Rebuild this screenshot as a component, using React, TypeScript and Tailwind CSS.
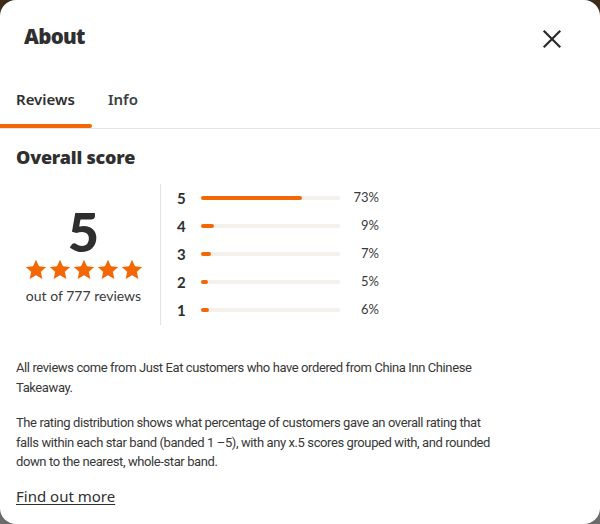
import React from "react";

const rows = [
  { star: 5, pct: 73 },
  { star: 4, pct: 9 },
  { star: 3, pct: 7 },
  { star: 2, pct: 5 },
  { star: 1, pct: 6 },
];

function Star() {
  return (
    <svg width="22" height="21" viewBox="0 0 24 23" aria-hidden>
      <path
        d="M12 0.8l3.3 7.2 7.9.8-5.9 5.3 1.7 7.8L12 17.9l-7 4 1.7-7.8L.8 8.8l7.9-.8z"
        fill="#f36805"
      />
    </svg>
  );
}

export default function App() {
  return (
    <div className="w-[600px] h-[524px] bg-[linear-gradient(to_bottom,#3d2c1a_50%,#6b6b6b_50%)]">
      <div
        className="w-full h-full bg-white rounded-[16px] text-[#2f2f2f] flex flex-col"
        style={{ fontFamily: '"Noto Sans", sans-serif' }}
      >
        <div className="flex items-center justify-between pl-6 pr-[38px] h-[72px]">
          <h1 className="text-[20.5px] font-black tracking-[-0.7px] leading-none">About</h1>
          <svg width="20" height="20" viewBox="0 0 20 20" className="mt-[5px]" aria-hidden>
            <path d="M2.5 2.5l15 15M17.5 2.5l-15 15" stroke="#2a2a2a" strokeWidth="2.2" strokeLinecap="square" />
          </svg>
        </div>
        <div className="border-b border-[#e5e5e5] flex">
          <div className="w-[92px] flex flex-col items-start">
            <span className="pl-4 pt-[17px] pb-[15px] text-[15px] font-semibold leading-[20px]">Reviews</span>
            <span className="h-[4px] w-[92px] bg-[#f36805] rounded-r-[2px]" />
          </div>
          <span className="pl-4 pt-[17px] text-[15px] font-semibold leading-[20px] text-[#3a3f44]">Info</span>
        </div>
        <div className="px-4">
          <h2 className="text-[18px] font-black tracking-[-0.2px] mt-[16px] leading-[24px]">Overall score</h2>
          <div className="flex mt-[15px]">
            <div className="w-[135px] mr-[9px] flex flex-col items-center" style={{ fontFamily: 'Lato, sans-serif' }}>
              <span className="text-[54px] font-black leading-[50px] mt-[23px]">5</span>
              <div className="flex gap-[2px] mt-[2px]">
                <Star />
                <Star />
                <Star />
                <Star />
                <Star />
              </div>
              <span className="text-[14px] leading-[20px] text-[#3a3a3a] mt-[6px]">out of 777 reviews</span>
            </div>
            <div className="border-l border-[#e3e3e3] pl-[16px] pb-[1px] flex flex-col" style={{ fontFamily: 'Lato, sans-serif' }}>
              {rows.map((r) => (
                <div key={r.star} className="flex items-center h-[28px]">
                  <span className="w-[24px] text-[15px] font-bold">{r.star}</span>
                  <div className="w-[139px] h-[4px] rounded-full bg-[#f4f0eb]">
                    <div className="h-full rounded-full bg-[#f36805]" style={{ width: `${r.pct}%` }} />
                  </div>
                  <span className="w-[39px] text-right text-[13px] text-[#3a3a3a]">{r.pct}%</span>
                </div>
              ))}
            </div>
          </div>
          <div className="max-w-[486px] text-[13px] tracking-[-0.4px] leading-[19.5px] text-[#383838]" style={{ fontFamily: 'Roboto, sans-serif' }}>
            <p className="mt-[33px]">
              All reviews come from Just Eat customers who have ordered from China Inn Chinese Takeaway.
            </p>
            <p className="mt-[16px]">
              The rating distribution shows what percentage of customers gave an overall rating that falls within each star band (banded 1 –5), with any x.5 scores grouped with, and rounded down to the nearest, whole-star band.
            </p>
          </div>
          <a className="inline-block mt-[13px] text-[15px] underline underline-offset-2 leading-[22px] text-[#2f2f2f]">Find out more</a>
        </div>
      </div>
    </div>
  );
}
